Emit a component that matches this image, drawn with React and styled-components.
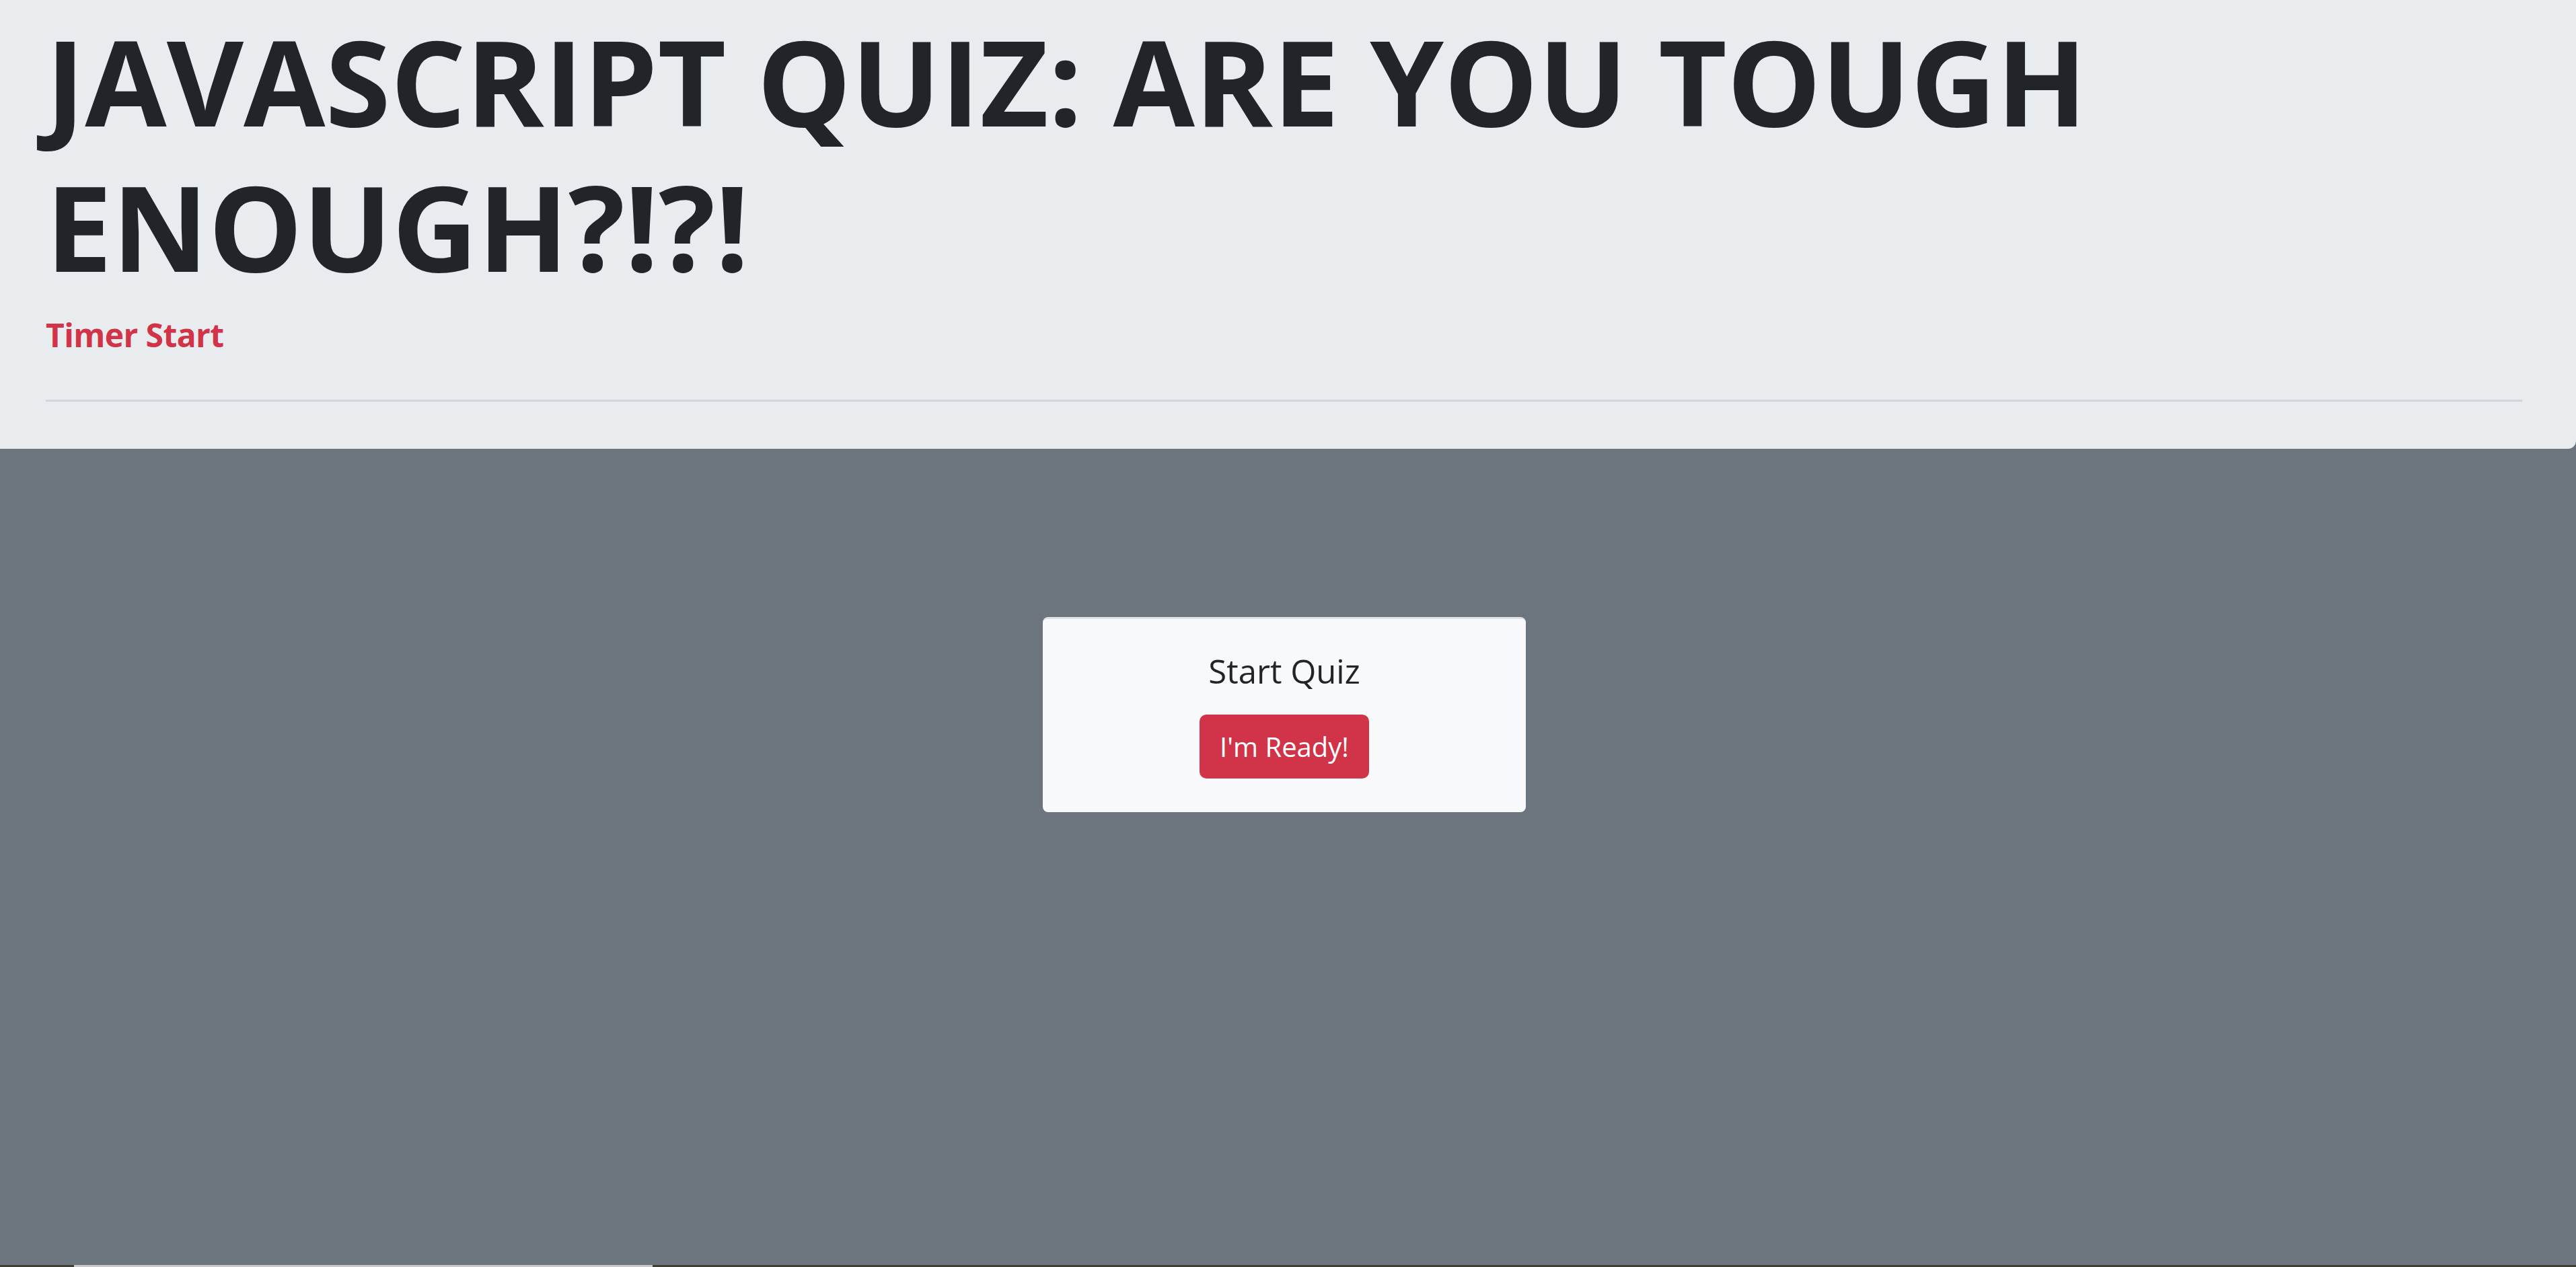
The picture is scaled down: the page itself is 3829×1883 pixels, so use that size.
import React from 'react';
import styled, { createGlobalStyle } from 'styled-components';

const GlobalStyle = createGlobalStyle`
    html, body {
        margin: 0;
        padding: 0;
        background: #6c757d;
        font-family: "Open Sans", "Noto Sans", "Liberation Sans", sans-serif;
        color: #212529;
    }
    * {
        box-sizing: border-box;
    }
`;

const Page = styled.div`
    display: flex;
    flex-direction: column;
    height: 100vh;
    overflow: hidden;
`;

const Jumbotron = styled.header`
    background: #e9ecef;
    padding: 12px 80px 0 68px;
    height: 667px;
    border-bottom-right-radius: 12px;
    display: flex;
    flex-direction: column;
`;

const Title = styled.h1`
    margin: 0;
    font-size: 176px;
    line-height: 216px;
    font-weight: 700;
    color: #212529;
`;

const Timer = styled.div`
    margin-top: 24px;
    font-size: 48px;
    line-height: 60px;
    font-weight: 700;
    letter-spacing: -0.6px;
    color: #d13448;
`;

const Divider = styled.hr`
    margin: 66px 0 0;
    border: 0;
    border-top: 3px solid #d1d4d8;
`;

const Main = styled.main`
    flex: 1;
    display: flex;
    justify-content: center;
    align-items: flex-start;
    padding: 250px 11px 0 0;
`;

const Card = styled.div`
    width: 718px;
    height: 290px;
    background: #f8f9fa;
    border-top: 3px solid #dee2e6;
    border-radius: 8px;
    padding: 47px 50px 50px;
    display: flex;
    flex-direction: column;
    align-items: center;
`;

const CardTitle = styled.h5`
    margin: 0 0 35px;
    font-size: 49px;
    line-height: 60px;
    font-weight: 500;
    color: #212529;
`;

const Button = styled.button`
    height: 95px;
    padding: 0 30px;
    border: 0;
    border-radius: 10px;
    background: ${props => props.variant === 'danger' ? '#d13448' : '#007bff'};
    color: #fff;
    font-family: inherit;
    font-size: 40px;
    line-height: 60px;
    cursor: pointer;
`;

const ScrollTrack = styled.div`
    height: 3px;
    background: #3f3f33;
    display: flex;
`;

const ScrollThumb = styled.div`
    margin-left: 110px;
    width: 860px;
    background: #c8c8c8;
`;

const App = () => {
    return (
        <>
            <GlobalStyle />
            <Page>
                <Jumbotron>
                    <Title>JAVASCRIPT QUIZ: ARE YOU TOUGH ENOUGH?!?!</Title>
                    <Timer>Timer Start</Timer>
                    <Divider />
                </Jumbotron>
                <Main>
                    <Card>
                        <CardTitle>Start Quiz</CardTitle>
                        <Button variant="danger">I'm Ready!</Button>
                    </Card>
                </Main>
                <ScrollTrack>
                    <ScrollThumb />
                </ScrollTrack>
            </Page>
        </>
    );
};

export default App;
